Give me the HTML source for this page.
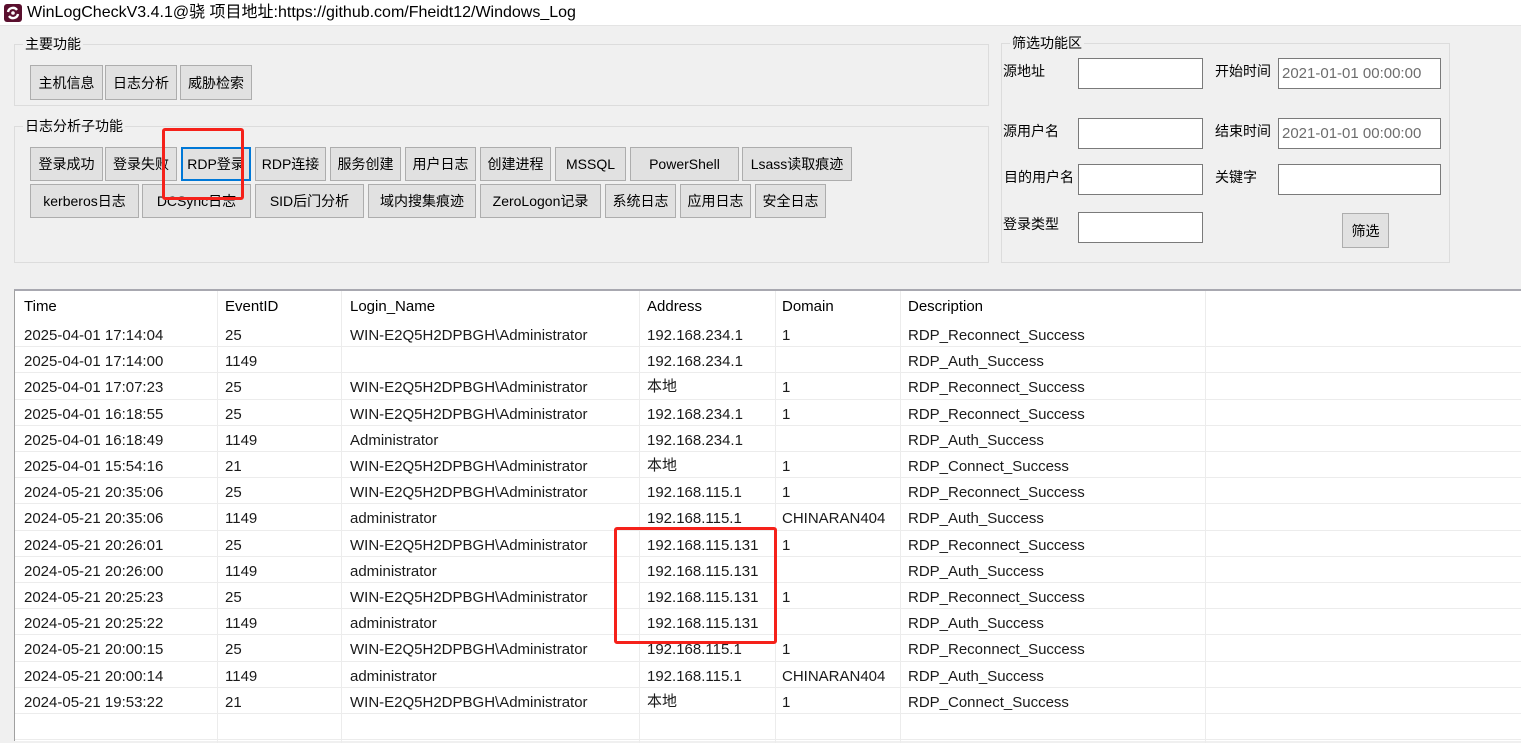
<!DOCTYPE html>
<html><head><meta charset="utf-8"><style>
*{margin:0;padding:0;box-sizing:border-box}
body{width:1521px;height:741px;overflow:hidden;background:#f0f0f0;font-family:"Liberation Sans","Noto Sans CJK SC",sans-serif;font-size:14px;color:#000;position:relative}
.a{position:absolute;white-space:nowrap}
.title{left:0;top:0;width:1521px;height:26px;background:#fff;border-bottom:1px solid #e4e4e4}
.grp{position:absolute;border:1px solid #dcdcdc}
.lbl{position:absolute;background:#f0f0f0;padding:0 2px;font-size:14px;color:#000;line-height:16px}
.btn{position:absolute;background:#e1e1e1;border:1px solid #adadad;text-align:center;font-size:14px;color:#000;display:flex;align-items:center;justify-content:center}
.inp{position:absolute;background:#fff;border:1px solid #7a7a7a;font-size:15px;color:#6d6d6d;padding-left:3px;display:flex;align-items:center}
.tbl{position:absolute;left:14px;top:289px;width:1507px;height:452px;background:#fff;border-top:2px solid #a8a8b0;border-left:1px solid #a0a0a0}
.row{position:absolute;left:0;width:1507px;height:26.2px;border-bottom:1px solid #ececec;font-size:15px;color:#1a1a1a}
.row span{position:absolute;top:6px;line-height:18px}
.row span.c{top:5px}
.vl{position:absolute;width:1px;background:#ececec}
.red{position:absolute;border:3px solid #f5211a;border-radius:3px}
</style></head><body>
<div class="a title"></div>
<svg class="a" style="left:4px;top:4px" width="18" height="18" viewBox="0 0 18 18"><rect width="18" height="18" rx="3" fill="#5a0f2e"/><path d="M4 8 A5 5 0 0 1 13 6" stroke="#fff" stroke-width="2.4" fill="none"/><path d="M14 10 A5 5 0 0 1 5 12" stroke="#fff" stroke-width="2.4" fill="none"/><circle cx="9" cy="9" r="1.8" fill="#fff"/></svg>
<div class="a" style="left:27px;top:3px;font-size:16px;line-height:20px">WinLogCheckV3.4.1@骁 项目地址:https://github.com/Fheidt12/Windows_Log</div>

<div class="grp" style="left:14px;top:44px;width:975px;height:62px"></div>
<div class="lbl" style="left:23px;top:36px">主要功能</div>
<div class="btn" style="left:30px;top:65px;width:73px;height:35px">主机信息</div>
<div class="btn" style="left:105px;top:65px;width:72px;height:35px">日志分析</div>
<div class="btn" style="left:180px;top:65px;width:72px;height:35px">威胁检索</div>

<div class="grp" style="left:14px;top:126px;width:975px;height:137px"></div>
<div class="lbl" style="left:23px;top:118px">日志分析子功能</div>
<div class="btn" style="left:30px;top:147px;width:73px;height:34px">登录成功</div>
<div class="btn" style="left:105px;top:147px;width:72px;height:34px">登录失败</div>
<div class="btn" style="left:181px;top:147px;width:70px;height:34px;border:2px solid #0078d7">RDP登录</div>
<div class="btn" style="left:255px;top:147px;width:71px;height:34px">RDP连接</div>
<div class="btn" style="left:330px;top:147px;width:71px;height:34px">服务创建</div>
<div class="btn" style="left:405px;top:147px;width:71px;height:34px">用户日志</div>
<div class="btn" style="left:480px;top:147px;width:71px;height:34px">创建进程</div>
<div class="btn" style="left:555px;top:147px;width:71px;height:34px">MSSQL</div>
<div class="btn" style="left:630px;top:147px;width:109px;height:34px">PowerShell</div>
<div class="btn" style="left:742px;top:147px;width:110px;height:34px">Lsass读取痕迹</div>
<div class="btn" style="left:30px;top:184px;width:109px;height:34px">kerberos日志</div>
<div class="btn" style="left:142px;top:184px;width:109px;height:34px">DCSync日志</div>
<div class="btn" style="left:255px;top:184px;width:109px;height:34px">SID后门分析</div>
<div class="btn" style="left:368px;top:184px;width:108px;height:34px">域内搜集痕迹</div>
<div class="btn" style="left:480px;top:184px;width:121px;height:34px">ZeroLogon记录</div>
<div class="btn" style="left:605px;top:184px;width:71px;height:34px">系统日志</div>
<div class="btn" style="left:680px;top:184px;width:71px;height:34px">应用日志</div>
<div class="btn" style="left:755px;top:184px;width:71px;height:34px">安全日志</div>

<div class="grp" style="left:1001px;top:43px;width:449px;height:220px"></div>
<div class="lbl" style="left:1010px;top:35px">筛选功能区</div>
<div class="a" style="left:1003px;top:61px">源地址</div>
<div class="inp" style="left:1078px;top:58px;width:125px;height:31px"></div>
<div class="a" style="left:1215px;top:61px">开始时间</div>
<div class="inp" style="left:1278px;top:58px;width:163px;height:31px">2021-01-01 00:00:00</div>
<div class="a" style="left:1003px;top:121px">源用户名</div>
<div class="inp" style="left:1078px;top:118px;width:125px;height:31px"></div>
<div class="a" style="left:1215px;top:121px">结束时间</div>
<div class="inp" style="left:1278px;top:118px;width:163px;height:31px">2021-01-01 00:00:00</div>
<div class="a" style="left:1004px;top:167px">目的用户名</div>
<div class="inp" style="left:1078px;top:164px;width:125px;height:31px"></div>
<div class="a" style="left:1215px;top:167px">关键字</div>
<div class="inp" style="left:1278px;top:164px;width:163px;height:31px"></div>
<div class="a" style="left:1003px;top:214px">登录类型</div>
<div class="inp" style="left:1078px;top:212px;width:125px;height:31px"></div>
<div class="btn" style="left:1342px;top:213px;width:47px;height:35px">筛选</div>

<div class="tbl">
<div class="row" style="top:0;height:30px;border-bottom:none;color:#000"><span style="left:9px;top:7px">Time</span><span style="left:210px;top:7px">EventID</span><span style="left:335px;top:7px">Login_Name</span><span style="left:632px;top:7px">Address</span><span style="left:767px;top:7px">Domain</span><span style="left:893px;top:7px">Description</span></div>
<div class="vl" style="left:202px;top:0;height:452px"></div>
<div class="vl" style="left:326px;top:0;height:452px"></div>
<div class="vl" style="left:624px;top:0;height:452px"></div>
<div class="vl" style="left:760px;top:0;height:452px"></div>
<div class="vl" style="left:885px;top:0;height:452px"></div>
<div class="vl" style="left:1190px;top:0;height:452px"></div>
<div class="row" style="top:30px"><span style="left:9px">2025-04-01 17:14:04</span><span style="left:210px">25</span><span style="left:335px">WIN-E2Q5H2DPBGH\Administrator</span><span style="left:632px">192.168.234.1</span><span style="left:767px">1</span><span style="left:893px">RDP_Reconnect_Success</span></div>
<div class="row" style="top:56.2px"><span style="left:9px">2025-04-01 17:14:00</span><span style="left:210px">1149</span><span style="left:632px">192.168.234.1</span><span style="left:893px">RDP_Auth_Success</span></div>
<div class="row" style="top:82.4px"><span style="left:9px">2025-04-01 17:07:23</span><span style="left:210px">25</span><span style="left:335px">WIN-E2Q5H2DPBGH\Administrator</span><span class="c" style="left:632px">本地</span><span style="left:767px">1</span><span style="left:893px">RDP_Reconnect_Success</span></div>
<div class="row" style="top:108.6px"><span style="left:9px">2025-04-01 16:18:55</span><span style="left:210px">25</span><span style="left:335px">WIN-E2Q5H2DPBGH\Administrator</span><span style="left:632px">192.168.234.1</span><span style="left:767px">1</span><span style="left:893px">RDP_Reconnect_Success</span></div>
<div class="row" style="top:134.8px"><span style="left:9px">2025-04-01 16:18:49</span><span style="left:210px">1149</span><span style="left:335px">Administrator</span><span style="left:632px">192.168.234.1</span><span style="left:893px">RDP_Auth_Success</span></div>
<div class="row" style="top:161px"><span style="left:9px">2025-04-01 15:54:16</span><span style="left:210px">21</span><span style="left:335px">WIN-E2Q5H2DPBGH\Administrator</span><span class="c" style="left:632px">本地</span><span style="left:767px">1</span><span style="left:893px">RDP_Connect_Success</span></div>
<div class="row" style="top:187.2px"><span style="left:9px">2024-05-21 20:35:06</span><span style="left:210px">25</span><span style="left:335px">WIN-E2Q5H2DPBGH\Administrator</span><span style="left:632px">192.168.115.1</span><span style="left:767px">1</span><span style="left:893px">RDP_Reconnect_Success</span></div>
<div class="row" style="top:213.4px"><span style="left:9px">2024-05-21 20:35:06</span><span style="left:210px">1149</span><span style="left:335px">administrator</span><span style="left:632px">192.168.115.1</span><span style="left:767px">CHINARAN404</span><span style="left:893px">RDP_Auth_Success</span></div>
<div class="row" style="top:239.6px"><span style="left:9px">2024-05-21 20:26:01</span><span style="left:210px">25</span><span style="left:335px">WIN-E2Q5H2DPBGH\Administrator</span><span style="left:632px">192.168.115.131</span><span style="left:767px">1</span><span style="left:893px">RDP_Reconnect_Success</span></div>
<div class="row" style="top:265.8px"><span style="left:9px">2024-05-21 20:26:00</span><span style="left:210px">1149</span><span style="left:335px">administrator</span><span style="left:632px">192.168.115.131</span><span style="left:893px">RDP_Auth_Success</span></div>
<div class="row" style="top:292px"><span style="left:9px">2024-05-21 20:25:23</span><span style="left:210px">25</span><span style="left:335px">WIN-E2Q5H2DPBGH\Administrator</span><span style="left:632px">192.168.115.131</span><span style="left:767px">1</span><span style="left:893px">RDP_Reconnect_Success</span></div>
<div class="row" style="top:318.2px"><span style="left:9px">2024-05-21 20:25:22</span><span style="left:210px">1149</span><span style="left:335px">administrator</span><span style="left:632px">192.168.115.131</span><span style="left:893px">RDP_Auth_Success</span></div>
<div class="row" style="top:344.4px"><span style="left:9px">2024-05-21 20:00:15</span><span style="left:210px">25</span><span style="left:335px">WIN-E2Q5H2DPBGH\Administrator</span><span style="left:632px">192.168.115.1</span><span style="left:767px">1</span><span style="left:893px">RDP_Reconnect_Success</span></div>
<div class="row" style="top:370.6px"><span style="left:9px">2024-05-21 20:00:14</span><span style="left:210px">1149</span><span style="left:335px">administrator</span><span style="left:632px">192.168.115.1</span><span style="left:767px">CHINARAN404</span><span style="left:893px">RDP_Auth_Success</span></div>
<div class="row" style="top:396.8px"><span style="left:9px">2024-05-21 19:53:22</span><span style="left:210px">21</span><span style="left:335px">WIN-E2Q5H2DPBGH\Administrator</span><span class="c" style="left:632px">本地</span><span style="left:767px">1</span><span style="left:893px">RDP_Connect_Success</span></div>
<div class="row" style="top:423px"></div>
</div>

<div class="red" style="left:162px;top:128px;width:82px;height:72px"></div>
<div class="red" style="left:614px;top:527px;width:163px;height:117px"></div>
</body></html>
